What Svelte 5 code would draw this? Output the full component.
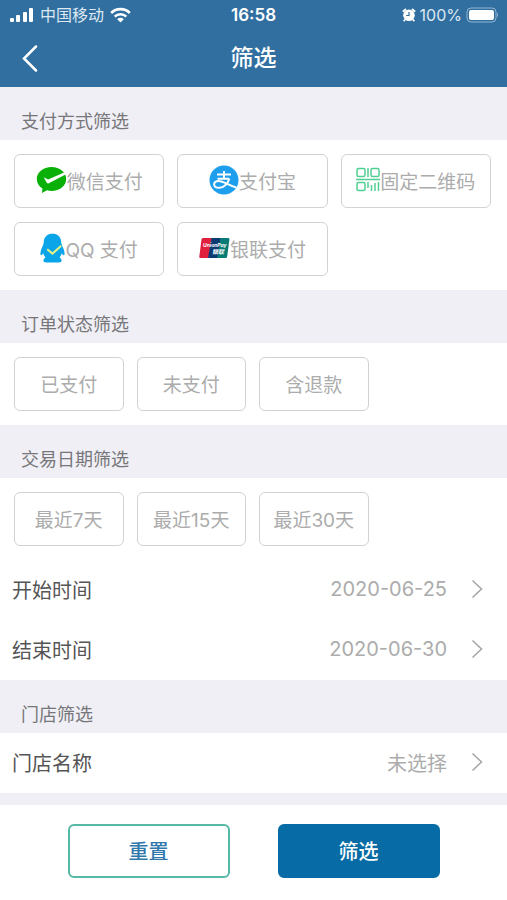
<script>
  const payments = [
    { id: "wechat", name: "微信支付" },
    { id: "alipay", name: "支付宝" },
    { id: "qrcode", name: "固定二维码" },
    { id: "qq", name: "QQ 支付" },
    { id: "union", name: "银联支付" },
  ]
  const statuses = ["已支付", "未支付", "含退款"]
  const ranges = ["最近7天", "最近15天", "最近30天"]

  let payment = $state(null)
  let status = $state(null)
  let range = $state(null)
  let startDate = $state("2020-06-25")
  let endDate = $state("2020-06-30")
  let store = $state("未选择")

  function toggle(current, value) {
    return current === value ? null : value
  }

  function reset() {
    payment = null
    status = null
    range = null
    store = "未选择"
  }
</script>

{#snippet payIcon(id)}
  {#if id === "wechat"}
    <svg width="31" height="28" viewBox="0 0 30 28" aria-hidden="true">
      <path fill="#09b007" d="M15 1C6.800 1 .3 6.300 .3 13c0 3.900 2.200 7.300 5.600 9.500L5.500 27l5-2.700c1.500.5 2.900.7 4.500.7 8.200 0 14.700-5.300 14.700-12S23.200 1 15 1z" />
      <path fill="#fff" d="M7.200 11.200l4.400 2.400L27.500 6.500 29.600 8.300 12.300 17.300c-.9.400-1.600.2-2-.6z" />
    </svg>
  {:else if id === "alipay"}
    <svg width="30" height="30" viewBox="0 0 30 30" aria-hidden="true">
      <circle cx="15" cy="15" r="14.500" fill="#1e9fee" />
      <g fill="none" stroke="#fff" stroke-width="2">
        <path d="M8 9.500h14M15 6v8M8.500 13.800h11.800" />
        <path d="M20.300 13.800c-1.400 4.500-5.300 9-10 9-3 0-5.200-1.400-5.200-3.600 0-2 1.900-3.200 4.400-3.200 5 0 9.500 4 18 6.600" />
      </g>
    </svg>
  {:else if id === "qrcode"}
    <svg width="24" height="26" viewBox="0 0 24 26" fill="none" stroke="#50cf93" stroke-width="1.500" aria-hidden="true">
      <rect x="1" y="1.500" width="8" height="8" rx="1.500" />
      <rect x="15" y="1.500" width="8" height="8" rx="1.500" />
      <rect x="1" y="15.500" width="8" height="8" rx="1.500" />
      <path d="M12 1v9M0 12.500h24M12 15v6M15.500 18v6M19 16v8M22.500 15v9" />
    </svg>
  {:else if id === "qq"}
    <svg width="25" height="30" viewBox="0 0 25 30" aria-hidden="true">
      <path fill="#0aa5e8" d="M12.500.5C7.400.5 3.800 4.300 3.800 9c0 1.400-.5 2.800-1.200 4.200C1.200 16 .2 19 .5 21.500c.2 1.300 1.300 1 2.800-1.300.3 1.600 1 3 2.100 4.200-1.300.9-2 2-2 3.400 0 1.200.8 1.700 3 1.700h12.200c2.200 0 3-.5 3-1.700 0-1.400-.7-2.500-2-3.400 1.100-1.200 1.800-2.600 2.100-4.200 1.500 2.300 2.600 2.600 2.800 1.300.3-2.500-.7-5.500-2.100-8.300-.7-1.400-1.200-2.800-1.200-4.200 0-4.700-3.600-8.500-8.700-8.500z" />
      <path fill="none" stroke="#e4f184" stroke-width="2" d="M7.200 16.300l5.300 4.300 8.700-7.800" />
    </svg>
  {:else}
    <svg width="31" height="20" viewBox="0 0 31 20" aria-hidden="true">
      <path fill="#e01f3d" d="M4 0h9L9.500 20H1.500Q0 20 .3 18.500L2.500 1.500Q2.700 0 4 0z" />
      <path fill="#0c3a72" d="M12.500 0h9.500L18.500 20H9z" />
      <path fill="#067a74" d="M21.500 0H29q1.700 0 1.400 1.500l-2.200 17Q28 20 26.500 20H18z" />
      <text x="4" y="9" class="union-mark">UnionPay</text>
      <text x="13" y="16" class="union-mark cn">银联</text>
    </svg>
  {/if}
{/snippet}

{#snippet row(label, value)}
  <button class="row">
    <span class="row-label">{label}</span>
    <span class="row-value">{value}</span>
    <svg width="12" height="20" viewBox="0 0 12 20" fill="none" stroke="#a5a5a5" stroke-width="1.500" aria-hidden="true">
      <path d="M1.500 1.500l9 8.500-9 8.500" />
    </svg>
  </button>
{/snippet}

<div class="page">
  <header>
    <div class="status-bar">
      <div class="status-side">
        <svg width="24" height="16" viewBox="0 0 24 16" fill="#fff" aria-hidden="true">
          <rect x="0" y="11" width="4" height="4" rx="1" />
          <rect x="6" y="8" width="4" height="7" rx="1" />
          <rect x="13" y="5" width="4" height="10" rx="1" />
          <rect x="19" y="1" width="4" height="14" rx="1" />
        </svg>
        <span class="carrier">中国移动</span>
        <svg width="21" height="16" viewBox="0 0 21 16" aria-hidden="true">
          <g fill="none" stroke="#fff" stroke-width="2.600">
            <path d="M1.200 6a13.200 13.200 0 0 1 18.600 0" />
            <path d="M4.700 9.600a8.200 8.200 0 0 1 11.600 0" />
          </g>
          <path fill="#fff" d="M10.500 15.500l-3.300-3.300a4.700 4.700 0 0 1 6.600 0z" />
        </svg>
      </div>
      <span class="clock">16:58</span>
      <div class="status-side right">
        <svg width="14" height="14" viewBox="0 0 14 14" aria-hidden="true">
          <circle cx="7" cy="7.300" r="5.800" fill="#fff" />
          <path d="M.8 3.800L4 1M13.200 3.800L10 1M3 11.500l-1.300 1.700M11 11.500l1.300 1.700" stroke="#fff" stroke-width="1.800" />
          <path d="M7 4v3.500H4.200" fill="none" stroke="#316fa1" stroke-width="1.200" />
        </svg>
        <span class="percent">100%</span>
        <svg width="33" height="16" viewBox="0 0 33 16" aria-hidden="true">
          <rect x="1" y="1" width="29" height="14" rx="4" fill="none" stroke="#94b5d0" />
          <rect x="3" y="3" width="25" height="10" rx="2" fill="#fff" />
          <path d="M31 5.500q2 2.500 0 5z" fill="#94b5d0" />
        </svg>
      </div>
    </div>
    <nav>
      <button class="back" aria-label="返回">
        <svg width="16" height="27" viewBox="0 0 16 27" fill="none" stroke="#fff" stroke-width="2.500" stroke-linecap="round" aria-hidden="true">
          <path d="M14 1.500L2 13.500l12 12" />
        </svg>
      </button>
      <h1>筛选</h1>
    </nav>
  </header>

  <main>
    <h2>支付方式筛选</h2>
    <div class="chips wide">
      {#each payments as item}
        <button
          class="chip"
          aria-pressed={payment === item.id}
          onclick={() => (payment = toggle(payment, item.id))}
        >
          {@render payIcon(item.id)}<span>{item.name}</span>
        </button>
      {/each}
    </div>

    <h2>订单状态筛选</h2>
    <div class="chips">
      {#each statuses as item}
        <button class="chip" aria-pressed={status === item} onclick={() => (status = toggle(status, item))}>
          {item}
        </button>
      {/each}
    </div>

    <h2>交易日期筛选</h2>
    <div class="chips">
      {#each ranges as item}
        <button class="chip" aria-pressed={range === item} onclick={() => (range = toggle(range, item))}>
          {item}
        </button>
      {/each}
    </div>
    {@render row("开始时间", startDate)}
    {@render row("结束时间", endDate)}

    <h2>门店筛选</h2>
    {@render row("门店名称", store)}
  </main>

  <footer>
    <button class="action" onclick={reset}>重置</button>
    <button class="action primary">筛选</button>
  </footer>
</div>

<style>
  :global(body) {
    margin: 0;
    background: #fff;
  }

  .page {
    font-family: Inter, "Noto Sans CJK SC", sans-serif;
    color: #555;
  }

  button {
    font-family: inherit;
    padding: 0;
    cursor: pointer;
  }

  svg {
    flex: none;
  }

  header {
    background: #316fa1;
    color: #fff;
  }

  .status-bar {
    display: grid;
    grid-template-columns: 1fr auto 1fr;
    align-items: center;
    height: 30px;
    padding: 0 8px;
  }

  .status-side {
    display: flex;
    align-items: center;
    gap: 6px;
    padding-left: 2px;
  }

  .right {
    justify-content: flex-end;
    gap: 4px;
  }

  .carrier,
  .percent {
    font-size: 16px;
    line-height: 20px;
    color: #dde8f1;
  }

  .clock {
    font-size: 17px;
    line-height: 20px;
    font-weight: 600;
  }

  nav {
    display: grid;
    grid-template-columns: 60px 1fr 60px;
    align-items: center;
    height: 57px;
  }

  .back {
    display: flex;
    align-items: center;
    height: 44px;
    padding-left: 22px;
    border: none;
    background: none;
  }

  h1 {
    margin: 0;
    padding-bottom: 2px;
    font-size: 23px;
    line-height: 30px;
    font-weight: 500;
    text-align: center;
  }

  h2 {
    box-sizing: border-box;
    height: 53px;
    margin: 0;
    padding: 23px 21px 0;
    background: #f0eff5;
    color: #77777b;
    font-size: 18px;
    line-height: 24px;
    font-weight: 400;
  }

  .chips {
    display: grid;
    grid-template-columns: repeat(4, 1fr);
    gap: 14px 13px;
    padding: 14px 16px 14px 14px;
  }

  .wide {
    grid-template-columns: repeat(3, 1fr);
  }

  .chip {
    display: flex;
    align-items: center;
    justify-content: center;
    height: 54px;
    padding-bottom: 2px;
    border: 1px solid #d2d2d2;
    border-radius: 6px;
    background: #fff;
    color: #acacac;
    font-size: 19px;
    white-space: nowrap;
  }

  .chip[aria-pressed="true"] {
    border-color: #076ca5;
    color: #076ca5;
  }

  .union-mark {
    fill: #fff;
    font-size: 5px;
    font-weight: 700;
    font-style: italic;
  }

  .cn {
    font-size: 6px;
  }

  .row {
    display: flex;
    align-items: center;
    width: 100%;
    height: 60px;
    padding: 0 24px 2px 12px;
    border: none;
    background: #fff;
    font-size: 20px;
  }

  .row-label {
    flex: 1;
    color: #555;
    text-align: left;
  }

  .row-value {
    margin-right: 24px;
    color: #acacac;
  }

  footer {
    display: flex;
    justify-content: center;
    gap: 48px;
    padding: 19px 67px;
    border-top: 12px solid #f0eff5;
  }

  .action {
    flex: 0 1 162px;
    height: 54px;
    padding-bottom: 2px;
    border: 2px solid #55b9a5;
    border-radius: 6px;
    background: #fff;
    color: #3078ac;
    font-size: 20px;
    font-weight: 500;
  }

  .primary {
    border-color: #076ca5;
    background: #076ca5;
    color: #fff;
  }
</style>
